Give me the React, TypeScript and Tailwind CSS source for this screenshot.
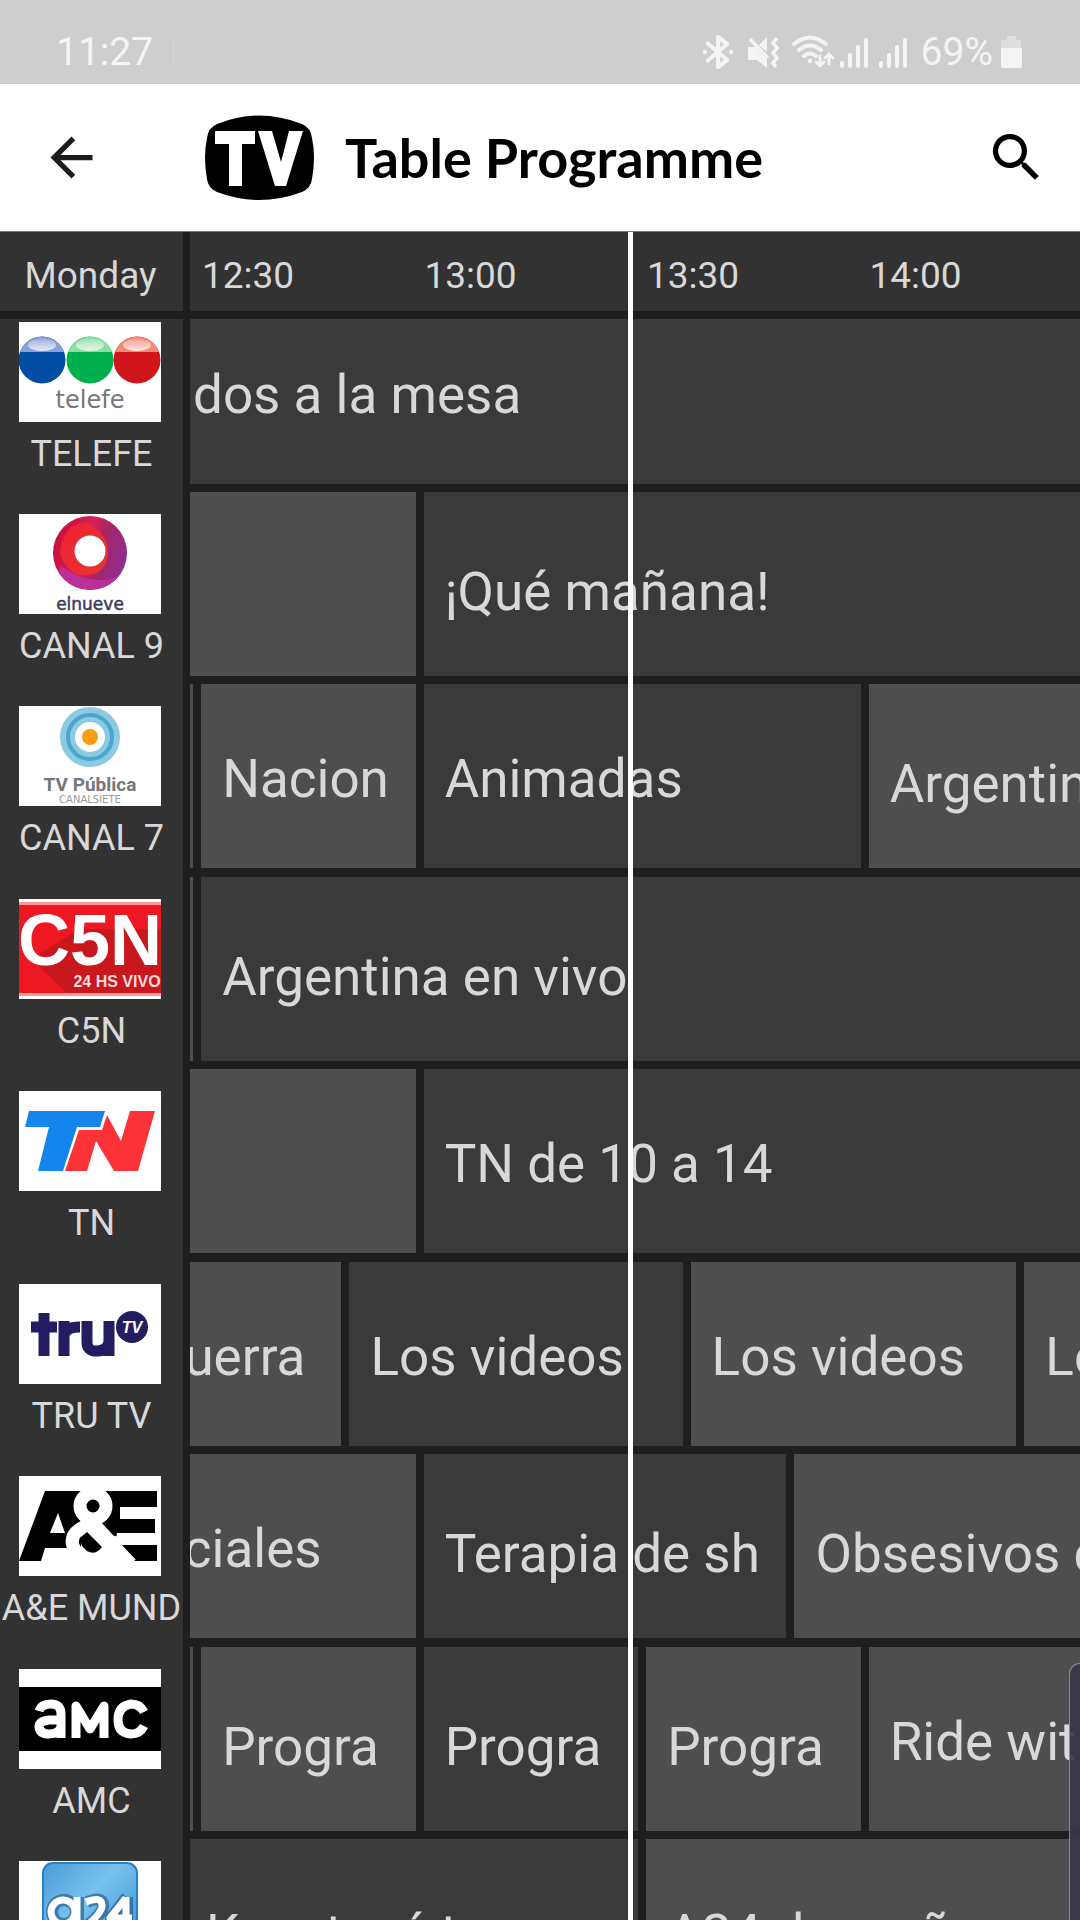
import type { ReactNode } from "react";

type Programme = { start: number; end: number; title: string; low?: boolean; live?: boolean; pad?: string };
type Channel = { name: string; logo: ReactNode; programmes: Programme[] };

/* Minutes are counted from 12:30; the window opens a little before it. */
const WINDOW_START = -1.5;
const WINDOW_LENGTH = 120;
const toPercent = (minutes: number) => `${(minutes / WINDOW_LENGTH) * 100}%`;

const SANS = "'Roboto', 'Liberation Sans', sans-serif";

function TelefeLogo() {
  const balls = [
    { x: 23, dark: "#034ea2", light: "#8b9fd8" },
    { x: 71, dark: "#00b04f", light: "#8fdca4" },
    { x: 118, dark: "#d0161b", light: "#f28a78" },
  ];
  return (
    <svg viewBox="0 0 142 100" className="block w-full bg-white" role="img" aria-label="telefe">
      <defs>
        <linearGradient id="gloss" x1="0" y1="0" x2="0" y2="1">
          <stop offset="0" stopColor="#fff" stopOpacity="0.2" />
          <stop offset="1" stopColor="#fff" stopOpacity="0.8" />
        </linearGradient>
      </defs>
      {balls.map((b) => (
        <g key={b.x}>
          <circle cx={b.x} cy="38" r="23.5" fill={b.dark} />
          <path d={`M${b.x - 22} 30 A23.5 23.5 0 0 1 ${b.x + 22} 30 Z`} fill={b.light} />
          <ellipse cx={b.x} cy="23" rx="14" ry="6" fill="url(#gloss)" />
        </g>
      ))}
      <text x="71" y="86" textAnchor="middle" fontSize="24" fill="#77777b" fontFamily="'DejaVu Sans', sans-serif">telefe</text>
    </svg>
  );
}

function NueveLogo() {
  return (
    <svg viewBox="0 0 142 100" className="block w-full bg-white" role="img" aria-label="el nueve">
      <defs>
        <linearGradient id="ring9" x1="0" y1="0.3" x2="1" y2="0.6">
          <stop offset="0" stopColor="#c50f36" />
          <stop offset="0.45" stopColor="#d81f5c" />
          <stop offset="0.65" stopColor="#a62466" />
          <stop offset="1" stopColor="#8e2f96" />
        </linearGradient>
        <linearGradient id="ringIn9" x1="0" y1="0" x2="1" y2="1">
          <stop offset="0" stopColor="#ef2036" />
          <stop offset="1" stopColor="#e8352c" />
        </linearGradient>
      </defs>
      <circle cx="71" cy="39" r="37" fill="url(#ring9)" />
      <path d="M40 58 A37 37 0 0 0 100 62 Q72 74 42 52Z" fill="#b8309a" />
      <path d="M41 40 Q42 12 66 8 Q82 14 88 30 Q92 52 76 60 Q50 66 41 40Z" fill="url(#ringIn9)" />
      <circle cx="71" cy="37" r="15.5" fill="#fff" />
      <text x="71" y="96" textAnchor="middle" fontSize="17" fill="#3c3c5c" stroke="#3c3c5c" strokeWidth="0.5" fontFamily="'DejaVu Sans', sans-serif">elnueve</text>
    </svg>
  );
}

function TvPublicaLogo() {
  return (
    <svg viewBox="0 0 142 100" className="block w-full bg-white" role="img" aria-label="TV Pública">
      <circle cx="71" cy="31" r="22.5" fill="none" stroke="#8cc9e2" strokeWidth="15" />
      <circle cx="71" cy="31" r="22" fill="none" stroke="#4ba6cc" strokeWidth="4" />
      <circle cx="71" cy="31" r="8" fill="#fb9d10" />
      <text x="71" y="85" textAnchor="middle" fontSize="19" fontWeight="700" fill="#77777a" fontFamily="'Roboto', sans-serif">TV Pública</text>
      <text x="71" y="97" textAnchor="middle" fontSize="10" fill="#9a9a9a" fontFamily="'DejaVu Sans', sans-serif">CANALSIETE</text>
    </svg>
  );
}

function C5nLogo() {
  return (
    <svg viewBox="0 0 142 100" className="block w-full bg-white" role="img" aria-label="C5N 24 hs vivo">
      <rect y="3" width="142" height="94" fill="#f79a9c" />
      <rect y="6" width="142" height="88" fill="#ee1822" />
      <path d="M12 60 L48 94 H142 V30 L60 30Z" fill="#c9171e" />
      <text x="71" y="66" textAnchor="middle" fontSize="72" fontWeight="700" fill="#fff" fontFamily="'Liberation Sans', sans-serif">C5N</text>
      <text x="98" y="88" textAnchor="middle" fontSize="16" fontWeight="700" fill="#ffdadb" fontFamily="'Liberation Sans', sans-serif">24 HS VIVO</text>
    </svg>
  );
}

function TnLogo() {
  return (
    <svg viewBox="0 0 142 100" className="block w-full bg-white" role="img" aria-label="TN">
      <path d="M10 20 H86 L81 36 H58 L44 80 H19 L30 36 H6Z" fill="#1585ee" />
      <path d="M60 39 H83 L88 24 L102 50 L111 20 H136 L119 80 H95 L77 50 L68 80 H46Z" fill="#fb3237" />
    </svg>
  );
}

function TruLogo() {
  return (
    <svg viewBox="0 0 142 100" className="block w-full bg-white" role="img" aria-label="tru TV">
      <g fill="none" stroke="#241c61" strokeWidth="11">
        <path d="M25 29 V72 M12 43 H38" />
        <path d="M45 72 V37 M45 52 Q46 43 61 43" />
        <path d="M68 37 V58 Q68 68 79 67 Q90 66 90 56 M90 37 V72" />
      </g>
      <circle cx="113" cy="43" r="16" fill="#241c61" />
      <text x="113" y="49" textAnchor="middle" fontSize="16" fontWeight="700" fontStyle="italic" fill="#fff" fontFamily="'Liberation Sans', sans-serif">TV</text>
    </svg>
  );
}

function AeLogo() {
  return (
    <svg viewBox="0 0 142 100" className="block w-full bg-white" role="img" aria-label="A&E">
      <path d="M26 15 H62 V72 H26 L22 85 H0Z" fill="#000" />
      <path d="M39 37 L46 57 H31Z" fill="#fff" />
      <path d="M84 15 H138 V31 H101 V43 H136 V57 H101 V69 H138 V85 H115 L103 69 L82 46Z" fill="#000" />
      <path d="M98 57 H138 V69 H96Z" fill="#fff" />
      <g fill="none" stroke="#fff" strokeWidth="13">
        <circle cx="74" cy="30" r="13" />
        <path d="M66 40 L112 88" />
        <path d="M66 50 Q50 58 54 70 Q60 84 76 82 Q92 78 96 60" />
      </g>
      <circle cx="74" cy="30" r="6.5" fill="#000" />
      <path d="M62 61 L68 56 L83 71 Q76 80 68 75 Q60 69 62 61Z" fill="#000" />
    </svg>
  );
}

function AmcLogo() {
  return (
    <svg viewBox="0 0 142 100" className="block w-full bg-white" role="img" aria-label="aMC">
      <rect y="18" width="142" height="64" fill="#000" />
      <g fill="none" stroke="#fff" strokeWidth="9">
        <path d="M20 42 Q22 35 32 35 Q42 35 42 45 V69 M42 51 H30 Q20 52 20 58 Q21 65 30 65 Q40 65 42 58" />
        <path d="M57 69 V37 L71 60 L85 37 V69" strokeLinejoin="round" />
        <path d="M125 43 Q121 35 112 35 Q99 37 99 51 Q99 64 112 65 Q121 65 125 57" />
      </g>
    </svg>
  );
}

function A24Logo() {
  return (
    <svg viewBox="0 0 142 100" className="block w-full bg-white" role="img" aria-label="a24">
      <defs>
        <linearGradient id="blue24" x1="0" y1="0" x2="1" y2="1">
          <stop offset="0" stopColor="#4b9bd9" />
          <stop offset="0.4" stopColor="#78c2ee" />
          <stop offset="1" stopColor="#2a86d0" />
        </linearGradient>
      </defs>
      <rect x="24" y="2" width="94" height="110" rx="10" fill="url(#blue24)" stroke="#2b7fc4" strokeWidth="2" />
      <g fill="none" strokeLinejoin="round">
        <g stroke="#24507f" strokeWidth="12" opacity="0.6">
          <circle cx="45" cy="51" r="12" />
          <path d="M59 36 V70 M68 41 Q85 34 84 46 Q82 54 68 65 H88 M108 36 L92 57 H114 M108 36 V70" />
        </g>
        <g stroke="#fff" strokeWidth="7">
          <circle cx="44" cy="51" r="12" />
          <path d="M58 36 V70 M67 41 Q84 34 83 46 Q81 54 67 65 H87 M107 37 L91 57 H113 M107 36 V70" />
        </g>
      </g>
    </svg>
  );
}

const CHANNELS: Channel[] = [
  { name: "TELEFE", logo: <TelefeLogo />, programmes: [{ start: -1.5, end: 150, title: "dos a la mesa", live: true, pad: "pl-[3px]" }] },
  {
    name: "CANAL 9",
    logo: <NueveLogo />,
    programmes: [
      { start: -1.5, end: 30, title: "" },
      { start: 30, end: 150, title: "¡Qué mañana!", live: true, low: true },
    ],
  },
  {
    name: "CANAL 7",
    logo: <TvPublicaLogo />,
    programmes: [
      { start: -1.5, end: 0, title: "", pad: "p-0" },
      { start: 0, end: 30, title: "Nacion" },
      { start: 30, end: 90, title: "Animadas", live: true },
      { start: 90, end: 150, title: "Argentina", low: true },
    ],
  },
  {
    name: "C5N",
    logo: <C5nLogo />,
    programmes: [
      { start: -1.5, end: 0, title: "", pad: "p-0" },
      { start: 0, end: 150, title: "Argentina en vivo", live: true, low: true },
    ],
  },
  {
    name: "TN",
    logo: <TnLogo />,
    programmes: [
      { start: -1.5, end: 30, title: "" },
      { start: 30, end: 150, title: "TN de 10 a 14", live: true },
    ],
  },
  {
    name: "TRU TV",
    logo: <TruLogo />,
    programmes: [
      { start: -1.5, end: 20, title: "uerra", pad: "justify-end pr-9" },
      { start: 20, end: 66, title: "Los videos", live: true },
      { start: 66, end: 111, title: "Los videos" },
      { start: 111, end: 150, title: "Los videos" },
    ],
  },
  {
    name: "A&E MUND",
    logo: <AeLogo />,
    programmes: [
      { start: -1.5, end: 30, title: "ciales", pad: "justify-end pr-[94px]" },
      { start: 30, end: 80, title: "Terapia de sh", live: true, low: true },
      { start: 80, end: 150, title: "Obsesivos c", low: true },
    ],
  },
  {
    name: "AMC",
    logo: <AmcLogo />,
    programmes: [
      { start: -1.5, end: 0, title: "", pad: "p-0" },
      { start: 0, end: 30, title: "Progra", low: true },
      { start: 30, end: 60, title: "Progra", live: true, low: true },
      { start: 60, end: 90, title: "Progra", low: true },
      { start: 90, end: 150, title: "Ride wit" },
    ],
  },
  {
    name: "A24",
    logo: <A24Logo />,
    programmes: [
      { start: -1.5, end: 60, title: "Konstacé t", live: true, pad: "pl-4" },
      { start: 60, end: 150, title: "A24 de mañana" },
    ],
  },
];

const HOURS = ["12:30", "13:00", "13:30", "14:00"];

function Signal() {
  return (
    <svg viewBox="0 0 28 34" className="h-[34px] w-7" fill="none" stroke="currentColor" strokeWidth="4" strokeLinecap="round" aria-hidden="true">
      <path d="M2 31V28M10 31V20M18 31V12M26 31V5" />
    </svg>
  );
}

function StatusBar() {
  return (
    <div className="flex h-[84px] items-end justify-between bg-[#cecece] pr-[58px] pb-2.5 pl-14 text-[#f4f4f4]">
      <div className="flex items-center gap-5">
        <span className="text-[39px] leading-[44px]">11:27</span>
        <span className="h-6 w-px bg-[#d6d6d6]" />
      </div>
      <div className="flex items-center">
        <svg viewBox="0 0 30 34" className="h-[34px] w-[30px]" fill="none" stroke="currentColor" strokeWidth="4.2" strokeLinejoin="round" strokeLinecap="round" aria-hidden="true">
          <path d="M5 8.500L24 25L15 32V2L24 9L5 25.500" />
          <path d="M1.500 17h.5M28 17h.5" />
        </svg>
        <svg viewBox="0 0 33 34" className="ml-3.5 h-[34px] w-[33px]" aria-hidden="true">
          <path d="M1 12H8L20 24V33L10 25H1Z M12 10L20 2V17Z" fill="currentColor" />
          <path d="M3 4L21 23" stroke="currentColor" strokeWidth="3.4" />
          <path d="M30 3L26 8L30 13L26 18L30 23L26 28L29 32" fill="none" stroke="currentColor" strokeWidth="3.6" />
        </svg>
        <svg viewBox="0 0 42 34" className="ml-3 h-[34px] w-[42px]" fill="none" stroke="currentColor" strokeWidth="3.8" strokeLinecap="round" aria-hidden="true">
          <path d="M2 9Q18-4 34 9M7 15Q18 6 29 15M12 21Q18 16 24 21" />
          <circle cx="18" cy="26" r="2.200" fill="currentColor" stroke="none" />
          <path d="M28 21V31M24 27L28 31L32 27M37 29V19M33 23L37 19L41 23" strokeWidth="2.800" />
        </svg>
        <div className="ml-1.5 flex gap-[11px]">
          <Signal />
          <Signal />
        </div>
        <span className="ml-3.5 text-[39px] leading-[44px]">69%</span>
        <svg viewBox="0 0 21 34" className="ml-2 h-[34px] w-[21px]" aria-hidden="true">
          <path d="M6 1H15V5H20V14H0V5H6Z" fill="#dedede" />
          <path d="M0 13H21V31Q21 33 19 33H2Q0 33 0 31Z" fill="currentColor" />
        </svg>
      </div>
    </div>
  );
}

function TopBar() {
  return (
    <header className="flex h-[148px] items-center border-b border-[#777] bg-white pr-8 pl-10 text-black">
      <button type="button" aria-label="Back" className="text-[#1c1c1c]">
        <svg viewBox="0 0 24 24" className="size-[63px]" fill="currentColor" aria-hidden="true">
          <path d="M20 11H7.830l5.590-5.590L12 4l-8 8 8 8 1.410-1.410L7.830 13H20v-2z" />
        </svg>
      </button>
      <svg viewBox="0 0 109 85" className="ml-[102px] h-[85px] w-[109px]" role="img" aria-label="TV">
        <path d="M12 9Q54-8 97 9Q106 13 107 23Q111 42 107 64Q106 73 97 77Q54 93 12 77Q3 73 2 64Q-2 42 2 23Q3 13 12 9Z" fill="#000" />
        <path d="M10 16H50V29H37V71H24V29H10Z" fill="#fff" />
        <path d="M53 16H67L76 47L84 16H98L81 71H70Z" fill="#fff" />
      </svg>
      <h1 className="ml-[31px] text-[54px] leading-[64px] font-bold" style={{ fontFamily: "'Lato', 'Open Sans', sans-serif" }}>
        Table Programme
      </h1>
      <button type="button" aria-label="Search" className="ml-auto">
        <svg viewBox="0 0 24 24" className="size-[63px]" fill="currentColor" aria-hidden="true">
          <path d="M15.500 14h-.790l-.280-.270A6.471 6.471 0 0 0 16 9.500 6.500 6.500 0 1 0 9.500 16c1.610 0 3.090-.590 4.230-1.570l.270.280v.790l5 4.990L20.490 19l-4.990-5zm-6 0C7.010 14 5 11.990 5 9.500S7.010 5 9.500 5 14 7.010 14 9.500 11.990 14 9.500 14z" />
        </svg>
      </button>
    </header>
  );
}

function ProgrammeCell({ p }: { p: Programme }) {
  return (
    <div role="cell" className="h-full shrink-0 pr-2" style={{ width: toPercent(p.end - p.start) }}>
      <div
        className={`flex h-full items-center overflow-hidden text-[53px] leading-[62px] whitespace-nowrap ${p.live ? "bg-[#3a3a3a]" : "bg-[#4e4e4e]"} ${p.low ? "pt-4" : "pt-1.5"} ${p.pad ?? "pl-[21px]"}`}
      >
        {p.title}
      </div>
    </div>
  );
}

function ChannelRow({ channel, first }: { channel: Channel; first: boolean }) {
  return (
    <div role="row" className={`flex min-h-0 overflow-hidden bg-[linear-gradient(to_right,#323232_183px,transparent_183px)] ${first ? "items-end" : "items-start"}`}>
      <div role="rowheader" className="flex h-48 w-[183px] shrink-0 flex-col items-center pt-[22px]">
        <div className="w-[145px] pr-[3px]">{channel.logo}</div>
        <span className="mt-[11px] text-[36px] leading-[42px] whitespace-nowrap">{channel.name}</span>
      </div>
      <div className="ml-[7px] flex h-48 min-w-0 flex-1 overflow-hidden pb-2">
        {channel.programmes.map((p) => (
          <ProgrammeCell key={p.start} p={p} />
        ))}
      </div>
    </div>
  );
}

export default function App() {
  return (
    <div className="relative flex h-screen flex-col overflow-hidden bg-[#1e1e1e] text-[#d8d8d8]" style={{ fontFamily: SANS }}>
      <StatusBar />
      <TopBar />
      <main role="table" aria-label="TV programme" className="relative flex min-h-0 flex-1 flex-col">
        <div role="row" className="mb-2 flex h-[79px] shrink-0 text-[37px] leading-[44px]">
          <div role="columnheader" className="flex w-[183px] shrink-0 items-center justify-center bg-[#323232] pt-2 pr-0.5">
            Monday
          </div>
          <div className="ml-[7px] flex min-w-0 flex-1 items-center bg-[#323232] pt-2">
            {HOURS.map((h) => (
              <div key={h} role="columnheader" className="w-1/4 shrink-0 pl-3">
                {h}
              </div>
            ))}
          </div>
        </div>
        <div role="rowgroup" className="grid min-h-0 flex-1 grid-rows-[173px_repeat(7,minmax(0,1fr))_81px]">
          {CHANNELS.map((c, i) => (
            <ChannelRow key={c.name} channel={c} first={i === 0} />
          ))}
        </div>
        <div className="pointer-events-none absolute inset-y-0 right-0 left-[190px]" aria-hidden="true">
          <div className="absolute inset-y-0 w-[5px] bg-white" style={{ left: toPercent(57.6 - WINDOW_START) }} />
        </div>
      </main>
      <div className="absolute right-0 bottom-0 h-[257px] w-[11px] rounded-tl-2xl border-t border-l border-[#8a8a8e] bg-[#383648]/90" aria-hidden="true" />
    </div>
  );
}
